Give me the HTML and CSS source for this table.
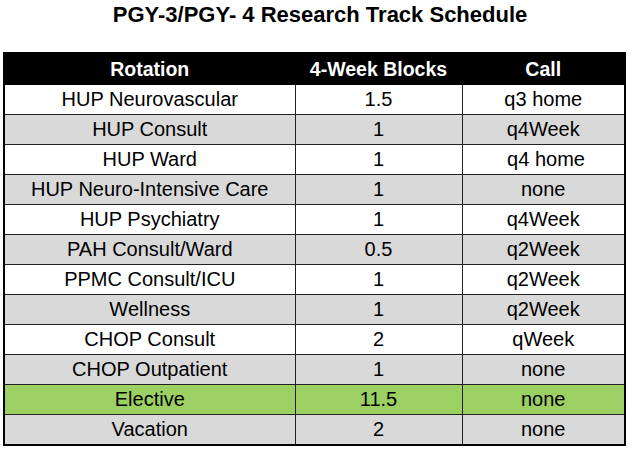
FILE: index.html
```html
<!DOCTYPE html>
<html>
<head>
<meta charset="utf-8">
<link rel="stylesheet" href="styles.css">
</head>
<body>
<h1 class="title">PGY-3/PGY- 4 Research Track Schedule</h1>
<table class="schedule">
  <colgroup>
    <col class="c1"><col class="c2"><col class="c3">
  </colgroup>
  <thead>
    <tr><th>Rotation</th><th>4-Week Blocks</th><th>Call</th></tr>
  </thead>
  <tbody>
    <tr class="white"><td>HUP Neurovascular</td><td>1.5</td><td>q3 home</td></tr>
    <tr class="gray"><td>HUP Consult</td><td>1</td><td>q4Week</td></tr>
    <tr class="white"><td>HUP Ward</td><td>1</td><td>&nbsp;q4 home</td></tr>
    <tr class="gray"><td>HUP Neuro-Intensive Care</td><td>1</td><td>none</td></tr>
    <tr class="white"><td>HUP Psychiatry</td><td>1</td><td>q4Week</td></tr>
    <tr class="gray"><td>PAH Consult/Ward</td><td>0.5</td><td>q2Week</td></tr>
    <tr class="white"><td>PPMC Consult/ICU</td><td>1</td><td>q2Week</td></tr>
    <tr class="gray"><td>Wellness</td><td>1</td><td>q2Week</td></tr>
    <tr class="white"><td>CHOP Consult</td><td>2</td><td>qWeek</td></tr>
    <tr class="gray"><td>CHOP Outpatient</td><td>1</td><td>none</td></tr>
    <tr class="green"><td>Elective</td><td>11.5</td><td>none</td></tr>
    <tr class="gray"><td>Vacation</td><td>2</td><td>none</td></tr>
  </tbody>
</table>
</body>
</html>
```
FILE: styles.css
```css
html, body {
  margin: 0;
  padding: 0;
  background: #ffffff;
  width: 640px;
  height: 449px;
  overflow: hidden;
}
body {
  font-family: "Liberation Sans", Arial, sans-serif;
  color: #000;
}
.title {
  margin: 0;
  padding-top: 2px;
  height: 52px;
  box-sizing: border-box;
  font-size: 22px;
  font-weight: bold;
  text-align: center;
  line-height: 26px;
}
.schedule {
  margin-left: 3px;
  width: 621px;
  border-collapse: collapse;
  border: 2px solid #000;
  table-layout: fixed;
}
.c1 { width: 291px; }
.c2 { width: 167px; }
.c3 { width: 163px; }
.schedule th {
  background: #000;
  color: #fff;
  font-size: 19.5px;
  font-weight: bold;
  height: 30px;
  padding: 0;
  border: 1px solid #000;
  text-align: center;
  vertical-align: middle;
}
.schedule td {
  font-size: 20px;
  height: 29px;
  padding: 0;
  border: 1px solid #222;
  text-align: center;
  vertical-align: middle;
  white-space: pre;
}
.white td { background: #ffffff; }
.gray td { background: #d9d9d9; }
.green td { background: #9dd062; }
```
